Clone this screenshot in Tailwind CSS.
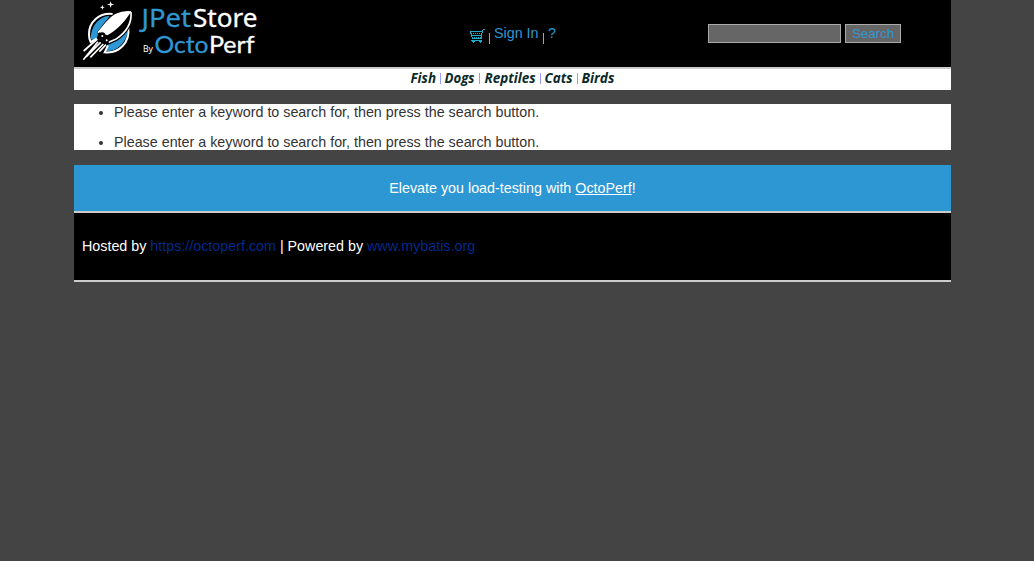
<!DOCTYPE html>
<html lang="en">
<head>
<meta charset="utf-8">
<title>JPetStore</title>
<script src="https://cdn.jsdelivr.net/npm/@tailwindcss/browser@4"></script>
</head>
<body class="min-h-screen bg-[#444] font-['Liberation_Sans',Arial,sans-serif] text-[14.3px] leading-[16px] text-[#333]">
<div class="ml-[74px] w-[877px]">
  <header class="flex h-[69px] border-b-2 border-[#ccc] bg-black">
    <svg class="h-[67px] w-[190px] shrink-0" viewBox="0 0 190 67" role="img" aria-label="JPetStore by OctoPerf">
      <g transform="translate(-4 0) scale(.33333)">
        <path d="M118 47C86 50 62 78 62 118L78 122 86 96 112 62Z" fill="#2f97d3"/>
        <path d="M174 92C168 130 142 154 106 154L116 132 140 120Z" fill="#2f97d3"/>
        <path d="M128 42C88 38 56 66 57 104Q57 116 62 126L80 116M175 84C180 126 148 162 104 157L114 136" fill="none" stroke="#fff" stroke-width="6"/>
        <path d="M184 35C153 32 127 45 109 68L86 97 102 116 118 128 140 118C169 98 187 70 184 35Z" fill="#000" stroke="#000" stroke-width="9" stroke-linejoin="round"/>
        <path d="M183 36C153 33 127 46 109 68L86 96 112 106C140 90 162 68 183 36Z" fill="#fff"/>
        <path d="M183 36C153 33 127 46 109 68L84 98M116 127L137 118C169 97 186 70 183 36" fill="none" stroke="#fff" stroke-width="5" stroke-linejoin="round"/>
        <circle cx="97" cy="106" r="9" fill="#000"/><circle cx="112" cy="116" r="9" fill="#000"/>
        <circle cx="97" cy="108" r="3" fill="#fff"/><circle cx="110" cy="121" r="3" fill="#fff"/>
        <path d="M82 117L41 153M84 125L40 179M92 127L49 170M100 132L61 172M108 134L88 155" stroke="#fff" stroke-width="5"/>
        <path d="M122 4L124.500 11 133 13.500 124.500 16 122 24 119.500 16 111 13.500 119.500 11ZM97 15L99 20 104 22 99 24 97 29 95 24 90 22 95 20Z" fill="#fff"/>
      </g>
      <g font-family="Noto Sans, sans-serif">
        <text x="67.500" y="26.500" font-size="26" fill="#2f97d3" stroke="#2f97d3" stroke-width=".3" textLength="49.500" lengthAdjust="spacingAndGlyphs">JPet</text>
        <text x="119" y="27" font-size="24.500" fill="#fff" stroke="#fff" stroke-width=".3" textLength="64.500" lengthAdjust="spacingAndGlyphs">Store</text>
        <text x="69" y="52" font-size="9" fill="#fff" textLength="10" lengthAdjust="spacingAndGlyphs">By</text>
      </g>
      <g font-family="Lato, sans-serif" font-size="23.500" stroke-width=".3">
        <text x="80.500" y="53" fill="#2f97d3" stroke="#2f97d3" textLength="54" lengthAdjust="spacingAndGlyphs">Octo</text>
        <text x="135" y="53" fill="#fff" stroke="#fff" textLength="45.500" lengthAdjust="spacingAndGlyphs">Perf</text>
      </g>
    </svg>
    <nav class="ml-[206px] flex w-[100px] pt-[25px] text-[#2f97d3]">
      <svg class="mt-[4px] h-[15px] w-[15px]" viewBox="0 0 15 15" fill="none" stroke="#20a8c8" shape-rendering="crispEdges">
        <path d="M0 2.500H12M1 4.500H2M3 4.500H4M5 4.500H6M7 4.500H8M9 4.500H10M1 6.500H12M2 8.500H3M4 8.500H5M6 8.500H7M8 8.500H9M10 8.500H11M3 9.500H11M1 11.500H12M3.500 11V14M10.500 11V14M2 12.500H5M9 12.500H12M12.500 1V4M13 .5H15M11.500 4V10M.5 2V5M1.500 5V8M2.500 8V10"/>
      </svg>
      <span class="mt-[8px] ml-[4px] h-[11px] w-px bg-[#9999ff]"></span>
      <a class="ml-[4px] w-[45px] whitespace-nowrap">Sign In</a>
      <span class="mt-[8px] ml-[4px] h-[11px] w-px bg-[#9999ff]"></span>
      <a class="ml-[4px]">?</a>
    </nav>
    <form class="ml-[138px] flex gap-[4px] pt-[24px]">
      <input aria-label="Search" class="h-[19px] w-[133px] border border-[#aaa] bg-[#666]">
      <button type="button" class="h-[19px] w-[56px] border border-[#aaa] bg-[#666] text-[13.333px] leading-[17px] text-[#2f97d3]">Search</button>
    </form>
  </header>
  <nav class="h-[21px] bg-white">
    <svg class="ml-[326px] h-[21px] w-[230px]" viewBox="0 0 230 21">
      <g font-family="Open Sans, sans-serif" font-size="13.500" font-weight="700" font-style="italic" fill="#0b2a2a">
        <text x="10.500" y="14" textLength="25.500" lengthAdjust="spacingAndGlyphs">Fish</text>
        <text x="44.500" y="14" textLength="30" lengthAdjust="spacingAndGlyphs">Dogs</text>
        <text x="84.500" y="14" textLength="51" lengthAdjust="spacingAndGlyphs">Reptiles</text>
        <text x="144.500" y="14" textLength="28" lengthAdjust="spacingAndGlyphs">Cats</text>
        <text x="181.500" y="14" textLength="33" lengthAdjust="spacingAndGlyphs">Birds</text>
      </g>
      <path d="M40.500 4V15M79.500 4V15M140.500 4V15M177.500 4V15" stroke="#9999ff"/>
    </svg>
  </nav>
  <main class="mt-[14px] h-[46px] bg-white">
    <ul class="flex list-disc flex-col gap-[14px] pl-[40px]">
      <li>Please enter a keyword to search for, then press the search button.</li>
      <li>Please enter a keyword to search for, then press the search button.</li>
    </ul>
  </main>
  <div class="mt-[15px] h-[48px] border-b-2 border-[#ccc] bg-[#2d97d4] pt-[15px] text-center text-white">Elevate you load-testing with <a class="underline">OctoPerf</a>!</div>
  <footer class="h-[69px] border-b-2 border-[#ccc] bg-black pt-[25px] pl-[8px] text-white">Hosted by <a class="text-[#002a8c]">https://octoperf.com</a> | Powered by <a class="text-[#002a8c]">www.mybatis.org</a></footer>
</div>
</body>
</html>
